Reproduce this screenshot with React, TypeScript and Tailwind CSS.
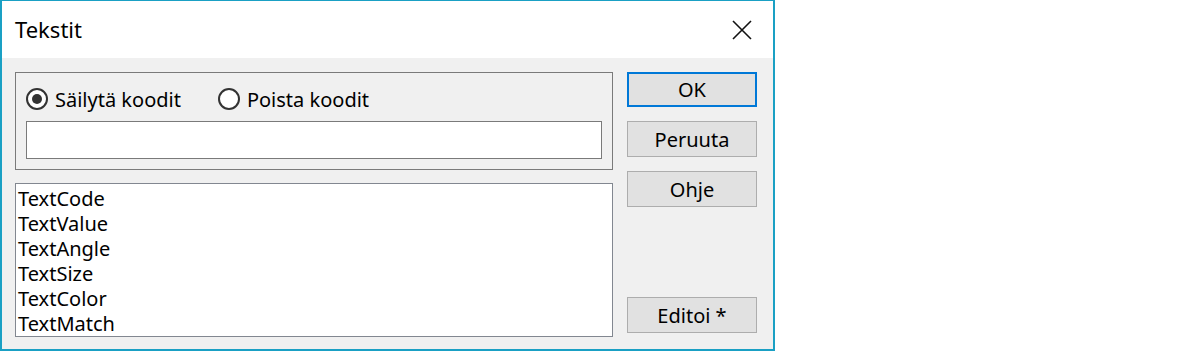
import React from 'react';

const items = ['TextCode', 'TextValue', 'TextAngle', 'TextSize', 'TextColor', 'TextMatch'];

function Radio({ label, checked }: { label: string; checked?: boolean }) {
  return (
    <label className="flex items-center gap-[7px]">
      <span className="flex h-[22px] w-[22px] items-center justify-center rounded-full border-2 border-[#333333] bg-white">
        {checked && <span className="h-[10px] w-[10px] rounded-full bg-[#333333]" />}
      </span>
      <span>{label}</span>
    </label>
  );
}

function Button({ label, primary }: { label: string; primary?: boolean }) {
  return (
    <button
      className={
        primary
          ? 'h-[35px] w-[130px] border-2 border-[#0078d7] bg-[#e1e1e1] text-black'
          : 'h-[36px] w-[130px] border border-[#adadad] bg-[#e1e1e1] text-black'
      }
    >
      {label}
    </button>
  );
}

export default function App() {
  return (
    <div
      className="flex h-[351px] w-[775px] flex-col border-x-2 border-t border-b-2 border-[#1aa0c4] bg-[#f0f0f0] text-[20px] leading-[25px] text-black"
      style={{ fontFamily: '"Segoe UI", "Noto Sans", sans-serif' }}
    >
      <div className="flex h-[57px] shrink-0 items-center justify-between bg-white pl-[13px] pr-[21px]">
        <span className="text-[22px]">Tekstit</span>
        <svg width="20" height="20" viewBox="0 0 20 20" className="mt-[1px]">
          <path d="M1 1 L19 19 M19 1 L1 19" stroke="#111" strokeWidth="1.6" fill="none" />
        </svg>
      </div>

      <div className="flex flex-1 gap-[14px] pb-[12px] pl-[13px] pr-[16px] pt-[14px]">
        <div className="flex w-[598px] flex-col gap-[13px]">
          <div className="flex h-[98px] flex-col border border-[#7a7a7a] px-[10px] pt-[14px]">
            <div className="flex h-[24px] items-center gap-[37px]">
              <Radio label="Säilytä koodit" checked />
              <Radio label="Poista koodit" />
            </div>
            <input className="mt-[10px] h-[38px] w-full border border-[#7a7a7a] bg-white px-1 outline-none" />
          </div>
          <div className="flex flex-1 flex-col border border-[#828790] bg-white pl-[2px] pt-[2px]">
            {items.map((t) => (
              <div key={t}>{t}</div>
            ))}
          </div>
        </div>

        <div className="flex w-[130px] flex-col gap-[14px]">
          <Button label="OK" primary />
          <Button label="Peruuta" />
          <Button label="Ohje" />
          <div className="mt-auto mb-[4px]">
            <Button label="Editoi *" />
          </div>
        </div>
      </div>
    </div>
  );
}
